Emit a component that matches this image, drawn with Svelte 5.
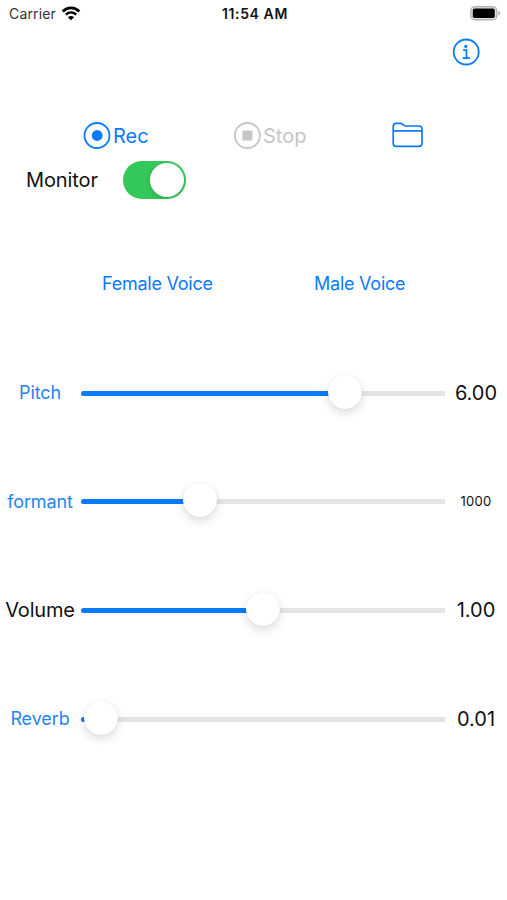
<script lang="ts">
	let monitor = $state(true);
	let sliders = $state([
		{ name: 'Pitch', kind: 'link', value: 6, min: -12, max: 12, step: 0.01, digits: 2 },
		{ name: 'formant', kind: 'link', value: 1000, min: 100, max: 3000, step: 1, digits: 0 },
		{ name: 'Volume', kind: 'plain', value: 1, min: 0, max: 2, step: 0.01, digits: 2 },
		{ name: 'Reverb', kind: 'link', value: 0.01, min: 0, max: 1, step: 0.01, digits: 2 }
	]);

	function fill(s: { value: number; min: number; max: number }) {
		const ratio = (s.value - s.min) / (s.max - s.min);
		return `${17 + ratio * 330}px`;
	}
</script>

<main>
	<header class="status">
		<div class="carrier">
			<span>Carrier</span>
			<svg width="20" height="15" viewBox="0 0 20 15" fill="none" stroke="#000">
				<path d="M1.7 5.5C6.5.7 13.5.7 18.3 5.5" stroke-width="2.7" />
				<path d="M4.8 8.7c3.1-2.9 7.3-2.9 10.4 0" stroke-width="2.4" />
				<path d="M10 14.3 6.9 11.2c1.8-1.7 4.4-1.7 6.2 0z" fill="#000" stroke="none" />
			</svg>
		</div>
		<span class="time">11:54 AM</span>
		<svg class="battery" width="31" height="15" viewBox="0 0 31 15">
			<rect x=".8" y=".8" width="26" height="13" rx="4" fill="#e4e4e4" stroke="#b4b4b4" stroke-width="1.4" />
			<rect x="2.8" y="2.6" width="22" height="9.4" rx="1.8" />
			<path d="M28.3 5c2.3.7 2.3 3.8 0 4.5z" fill="#a9a9a9" />
		</svg>
	</header>

	<div class="info">
		<button aria-label="Info">
			<svg width="28" height="28" viewBox="0 0 28 28" fill="none" stroke="currentColor">
				<circle cx="14.2" cy="14" r="12.5" stroke-width="1.8" />
				<circle cx="13.8" cy="8.4" r="1.6" fill="currentColor" stroke="none" />
				<path d="M11.1 12.2h3.4v7.7M10.6 20.2h7.4" stroke-width="1.7" />
			</svg>
		</button>
	</div>

	<div class="toolbar">
		<button class="rec">
			<svg width="28" height="28" viewBox="0 0 28 28">
				<circle cx="14" cy="13.5" r="12.5" fill="none" stroke="currentColor" stroke-width="1.8" />
				<circle cx="14.2" cy="13.5" r="5.4" fill="currentColor" />
			</svg>
			<span>Rec</span>
		</button>
		<button class="stop" disabled>
			<svg width="28" height="28" viewBox="0 0 28 28">
				<circle cx="14.4" cy="13.5" r="12.5" fill="none" stroke="currentColor" stroke-width="1.8" />
				<rect x="9.4" y="8.5" width="10" height="10" rx="1" fill="currentColor" />
			</svg>
			<span>Stop</span>
		</button>
		<button class="files" aria-label="Files">
			<svg width="32" height="28" viewBox="0 0 32 28" fill="none" stroke="currentColor" stroke-width="1.7">
				<path d="M1.2 21.2V4.4c0-2 1.1-3.1 3.1-3.1H8c1.2 0 1.9.3 2.7 1l1 .9c.7.6 1.2.8 2.2.8h13c2.1 0 3.1 1.1 3.1 3.1v14.1c0 2-1 3.1-3.1 3.1H4.3c-2 0-3.1-1.1-3.1-3.1z" />
				<path d="M1.2 8.9H30" />
			</svg>
		</button>
	</div>

	<label class="monitor">
		<span>Monitor</span>
		<input type="checkbox" role="switch" bind:checked={monitor} />
	</label>

	<div class="voices">
		<button class="female">Female Voice</button>
		<button class="male">Male Voice</button>
	</div>

	<section class="sliders">
		{#each sliders as s}
			<div class="row">
				<span class="name {s.kind}">{s.name}</span>
				<input
					type="range"
					aria-label={s.name}
					min={s.min}
					max={s.max}
					step={s.step}
					bind:value={s.value}
					style="--fill: {fill(s)}"
				/>
				<span class="value" class:small={s.digits === 0}>{s.value.toFixed(s.digits)}</span>
			</div>
		{/each}
	</section>
</main>

<style>
	:global(body) {
		margin: 0;
		background: #fff;
	}

	main {
		width: 507px;
		height: 900px;
		overflow: hidden;
		background: #fff;
		color: #111;
		font-family: Inter, 'Liberation Sans', sans-serif;
	}

	svg {
		display: block;
		flex: none;
	}

	button {
		display: flex;
		align-items: center;
		padding: 0;
		border: none;
		background: none;
		color: #0a7aff;
		font: inherit;
		letter-spacing: inherit;
		white-space: nowrap;
	}

	.status {
		display: grid;
		grid-template-columns: 1fr auto 1fr;
		align-items: center;
		box-sizing: border-box;
		height: 27px;
		padding: 0 6px 0 9px;
		font-size: 14px;
	}

	.carrier {
		display: flex;
		align-items: center;
		gap: 5px;
		color: #333;
		letter-spacing: 0.15px;
	}

	.time {
		font-weight: 600;
		letter-spacing: 0.6px;
	}

	.battery {
		justify-self: end;
	}

	.info {
		display: flex;
		justify-content: flex-end;
		padding: 11px 27px 0 0;
	}

	.toolbar {
		display: flex;
		align-items: center;
		height: 28px;
		margin-top: 56px;
		padding-left: 83px;
		font-size: 20px;
	}

	.toolbar span {
		margin-left: 2px;
	}

	.rec {
		width: 150px;
	}

	.stop {
		width: 159px;
		color: #c5c5c5;
	}

	.monitor {
		display: flex;
		align-items: center;
		gap: 25px;
		height: 38px;
		margin-top: 11px;
		padding-left: 26px;
		font-size: 20px;
		letter-spacing: -0.1px;
	}

	.monitor span {
		width: 72px;
	}

	.monitor input {
		appearance: none;
		display: flex;
		align-items: center;
		width: 63px;
		height: 38px;
		margin: 0;
		padding: 2px;
		box-sizing: border-box;
		border-radius: 19px;
		background: #e3e3e5;
	}

	.monitor input:checked {
		justify-content: flex-end;
		background: #34c759;
	}

	.monitor input::before {
		content: '';
		width: 34px;
		height: 34px;
		border-radius: 50%;
		background: #fff;
		box-shadow: 0 2px 5px rgba(0, 0, 0, 0.12);
	}

	.voices {
		display: flex;
		height: 30px;
		margin-top: 69px;
		padding-left: 102px;
		font-size: 18px;
		letter-spacing: -0.24px;
	}

	.female {
		width: 212px;
	}

	.sliders {
		display: flex;
		flex-direction: column;
		gap: 68.7px;
		margin-top: 74px;
	}

	.row {
		display: grid;
		grid-template-columns: 80px 365px 62px;
		align-items: center;
		height: 40px;
	}

	.name,
	.value {
		text-align: center;
		white-space: nowrap;
	}

	.link {
		color: #2584f4;
		font-size: 18px;
		letter-spacing: -0.1px;
	}

	.plain {
		padding-top: 1px;
		font-size: 20px;
		letter-spacing: -0.2px;
	}

	.value {
		padding-top: 1px;
		font-size: 20px;
	}

	.value.small {
		padding: 0 0 1px;
		font-size: 13px;
		letter-spacing: 0.3px;
	}

	.row input {
		appearance: none;
		width: 364px;
		height: 40px;
		margin: 1px 0 0 0.6px;
		background: none;
	}

	.row input::-webkit-slider-runnable-track {
		height: 5px;
		border-radius: 3px 0 0 3px;
		background: linear-gradient(to right, #0a7aff var(--fill), #e4e4e4 var(--fill));
	}

	.row input::-webkit-slider-thumb {
		appearance: none;
		width: 34px;
		height: 34px;
		margin-top: -16px;
		border-radius: 50%;
		background: #fff;
		box-shadow:
			0 0 1px rgba(0, 0, 0, 0.12),
			0 4px 10px rgba(0, 0, 0, 0.14);
	}
</style>
